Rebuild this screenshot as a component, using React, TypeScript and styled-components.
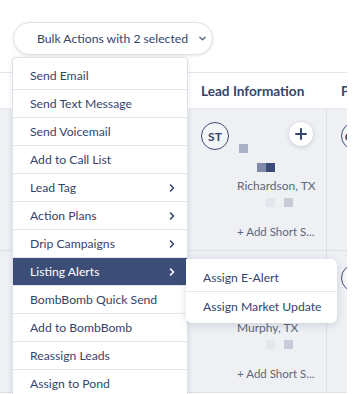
import React from 'react';
import styled, { createGlobalStyle } from 'styled-components';

const GlobalStyle = createGlobalStyle`
  body {
    margin: 0;
    background: #ffffff;
    font-family: Lato, "Open Sans", sans-serif;
    color: #34456b;
  }
`;

const Page = styled.div`
  position: relative;
  width: 360px;
  height: 394px;
  overflow: hidden;
`;

const Toolbar = styled.div`
  padding: 22px 0 0 13px;
  height: 72px;
  box-sizing: border-box;
`;

const BulkButton = styled.button`
  width: 200px;
  height: 33px;
  border: 1px solid #dfe2e9;
  border-radius: 17px;
  background: #fff;
  box-shadow: 0 1px 3px rgba(40, 55, 90, 0.12);
  display: flex;
  align-items: center;
  padding: 0 0 0 23px;
  font-family: Lato, sans-serif;
  font-size: 12.2px;
  color: #34456b;
  gap: 11px;
  white-space: nowrap;
  cursor: pointer;
`;

const Table = styled.div`
  width: 347px;
  overflow: hidden;
  border-top: 1px solid #e2e5ec;
`;

const Grid = styled.div`
  display: grid;
  grid-template-columns: 187px 140px 140px;
  width: 467px;
`;

const HeaderCell = styled.div`
  height: 35px;
  display: flex;
  align-items: center;
  padding-left: 14px;
  font-size: 13.6px;
  font-weight: 700;
  color: #34456b;
  background: #fff;
  white-space: nowrap;
  border-bottom: 1px solid #e6e8ee;
`;

const BodyCell = styled.div`
  height: 142px;
  box-sizing: border-box;
  background: #eef0f4;
  border-right: 1px solid #dde0e7;
  border-bottom: 1px solid #dde0e7;
  padding: 13px 13px 0 14px;
  display: grid;
  grid-template-columns: 28px 8px 1fr 24px;
  grid-template-rows: 28px 1fr;
`;

const Avatar = styled.div`
  grid-column: 1;
  grid-row: 1;
  width: 28px;
  height: 28px;
  box-sizing: border-box;
  border: 1.5px solid #3c4c74;
  border-radius: 50%;
  display: flex;
  align-items: center;
  justify-content: center;
  font-size: 12px;
  font-weight: 700;
  color: #34456b;
  background: #f4f5f8;
`;

const PlusButton = styled.div`
  grid-column: 4;
  grid-row: 1;
  width: 24px;
  height: 24px;
  border-radius: 50%;
  background: #fff;
  box-shadow: 0 1px 4px rgba(40, 55, 90, 0.22);
  display: flex;
  align-items: center;
  justify-content: center;
  z-index: 1;
`;

const Content = styled.div`
  grid-column: 3 / 5;
  grid-row: 1 / 3;
  padding-top: 22px;
  display: flex;
  flex-direction: column;
  min-width: 0;
`;

const PixelRow = styled.div<{ $indent: number; $gap: number }>`
  display: flex;
  height: 9px;
  margin: ${(p) => p.$gap}px 0 0 ${(p) => p.$indent}px;
`;

const Pixel = styled.span<{ $c: string }>`
  width: 9px;
  height: 9px;
  background: ${(p) => p.$c};
`;

const City = styled.div<{ $top: number }>`
  margin-top: ${(p) => p.$top}px;
  font-size: 12px;
  color: #5f6679;
  line-height: 16px;
  white-space: nowrap;
`;

const AddShort = styled.div<{ $top: number }>`
  margin-top: ${(p) => p.$top}px;
  font-size: 11.5px;
  color: #5f6679;
  line-height: 16px;
  white-space: nowrap;
`;

const Menu = styled.ul`
  position: absolute;
  left: 12px;
  top: 57px;
  width: 174px;
  margin: 0;
  padding: 4px 0 0;
  list-style: none;
  background: #fff;
  border: 1px solid #dde0e8;
  border-radius: 4px 4px 0 0;
  box-shadow: 0 2px 6px rgba(40, 55, 90, 0.12);
  z-index: 5;
`;

const MenuItem = styled.li<{ $active?: boolean }>`
  height: 27px;
  display: flex;
  align-items: center;
  justify-content: space-between;
  padding: 0 11px 0 17px;
  font-size: 12.2px;
  border-bottom: 1px solid #e4e7ed;
  color: ${(p) => (p.$active ? '#ffffff' : '#34456b')};
  background: ${(p) => (p.$active ? '#3c4e77' : '#ffffff')};
  white-space: nowrap;
`;

const SubMenu = styled.ul`
  position: absolute;
  left: 186px;
  top: 259px;
  width: 151px;
  margin: 0;
  padding: 4px 0 3px;
  list-style: none;
  background: #fff;
  border-radius: 0 6px 6px 6px;
  box-shadow: 0 2px 8px rgba(40, 55, 90, 0.16);
  z-index: 6;
`;

const SubItem = styled.li`
  height: 28px;
  display: flex;
  align-items: center;
  padding-left: 17px;
  font-size: 12.2px;
  color: #34456b;
  white-space: nowrap;
  & + & {
    border-top: 1px solid #e4e7ed;
  }
`;

const Chevron = ({ down, color, size = 8 }: { down?: boolean; color: string; size?: number }) => (
  <svg width={size} height={size} viewBox="0 0 8 8" style={{ transform: down ? 'rotate(90deg)' : undefined }}>
    <path d="M2.5 1 L5.5 4 L2.5 7" fill="none" stroke={color} strokeWidth="1.6" strokeLinecap="round" strokeLinejoin="round" />
  </svg>
);

const menuItems: { label: string; sub?: boolean; active?: boolean }[] = [
  { label: 'Send Email' },
  { label: 'Send Text Message' },
  { label: 'Send Voicemail' },
  { label: 'Add to Call List' },
  { label: 'Lead Tag', sub: true },
  { label: 'Action Plans', sub: true },
  { label: 'Drip Campaigns', sub: true },
  { label: 'Listing Alerts', sub: true, active: true },
  { label: 'BombBomb Quick Send' },
  { label: 'Add to BombBomb' },
  { label: 'Reassign Leads' },
  { label: 'Assign to Pond' },
];

const LeadCell = ({ initials, city }: { initials: string; city: string }) => (
  <BodyCell>
    <Avatar>{initials}</Avatar>
    <PlusButton>
      <svg width="12" height="12" viewBox="0 0 12 12">
        <path d="M6 1 V11 M1 6 H11" stroke="#34456b" strokeWidth="2" strokeLinecap="round" />
      </svg>
    </PlusButton>
    <Content>
      <PixelRow $indent={2} $gap={0}>
        <Pixel $c="#a9b1c6" />
      </PixelRow>
      <PixelRow $indent={20} $gap={10}>
        <Pixel $c="#7f8aa9" />
        <Pixel $c="#3c4c78" />
      </PixelRow>
      <City $top={6}>{city}</City>
      <PixelRow $indent={29} $gap={4}>
        <Pixel $c="#e3e6ec" />
        <Pixel $c="#eef0f4" />
        <Pixel $c="#c7ccd8" />
      </PixelRow>
      <AddShort $top={17}>+ Add Short S...</AddShort>
    </Content>
  </BodyCell>
);

const App: React.FC = () => {
  return (
    <Page>
      <GlobalStyle />
      <Toolbar>
        <BulkButton>
          Bulk Actions with 2 selected
          <Chevron down color="#5a6887" size={7} />
        </BulkButton>
      </Toolbar>
      <Table>
        <Grid>
          <HeaderCell />
          <HeaderCell>Lead Information</HeaderCell>
          <HeaderCell>P</HeaderCell>
          <BodyCell />
          <LeadCell initials="ST" city="Richardson, TX" />
          <LeadCell initials="CW" city="Plano, TX" />
          <BodyCell />
          <LeadCell initials="JM" city="Murphy, TX" />
          <LeadCell initials="AB" city="Allen, TX" />
        </Grid>
      </Table>
      <Menu>
        {menuItems.map((m) => (
          <MenuItem key={m.label} $active={m.active}>
            {m.label}
            {m.sub && <Chevron color={m.active ? '#ffffff' : '#34456b'} />}
          </MenuItem>
        ))}
      </Menu>
      <SubMenu>
        <SubItem>Assign E-Alert</SubItem>
        <SubItem>Assign Market Update</SubItem>
      </SubMenu>
    </Page>
  );
};

export default App;
